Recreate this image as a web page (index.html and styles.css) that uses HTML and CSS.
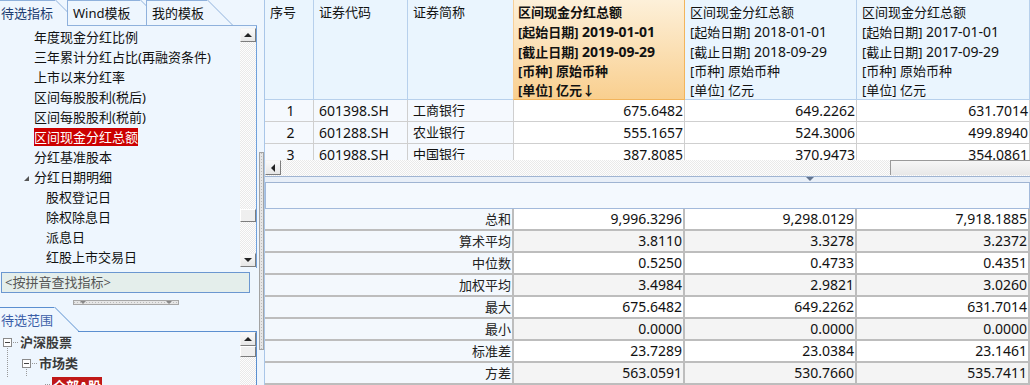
FILE: index.html
```html
<!DOCTYPE html>
<html lang="zh-CN">
<head>
  <meta charset="UTF-8" />
  <title>区间现金分红总额</title>
  <link rel="stylesheet" href="styles.css">
</head>
<body>
  <div class="app">
    <aside class="side">
      <div class="tabs">
        <div class="tab active">待选指标</div>
        <div class="tab wind">Wind模板</div>
        <div class="tab mine">我的模板</div>
      </div>

      <div class="listbox">
        <ul class="ind-list">
          <li>年度现金分红比例</li>
          <li>三年累计分红占比(再融资条件)</li>
          <li>上市以来分红率</li>
          <li>区间每股股利(税后)</li>
          <li>区间每股股利(税前)</li>
          <li class="sel"><span>区间现金分红总额</span></li>
          <li>分红基准股本</li>
          <li class="group"><i class="tri"></i>分红日期明细</li>
          <li class="child">股权登记日</li>
          <li class="child">除权除息日</li>
          <li class="child">派息日</li>
          <li class="child">红股上市交易日</li>
        </ul>
        <div class="vscroll">
          <div class="sb-btn"><i class="arr-up"></i></div>
          <div class="sb-track"><div class="sb-thumb list-thumb"></div></div>
          <div class="sb-btn"><i class="arr-down"></i></div>
        </div>
      </div>

      <div class="search">&lt;按拼音查找指标&gt;</div>
      <div class="hgrip"><i></i><i></i></div>

      <div class="tab2">待选范围</div>
      <div class="treebox">
        <div class="tree">
          <div class="node lv1"><i class="box"></i><i class="dots"></i><b>沪深股票</b></div>
          <div class="node lv2"><i class="box"></i><i class="dots"></i><b>市场类</b></div>
          <div class="node lv3"><i class="dots"></i><span class="tree-sel">全部A股</span></div>
        </div>
        <div class="vscroll">
          <div class="sb-btn"><i class="arr-up"></i></div>
          <div class="sb-track"><div class="sb-thumb"></div></div>
        </div>
      </div>
    </aside>

    <div class="vsplit"><div class="grip"></div></div>

    <main class="main">
      <div class="top">
        <div class="grid top-grid">
          <div class="hd">序号</div>
          <div class="hd">证券代码</div>
          <div class="hd">证券简称</div>
          <div class="hd hot">
            <div>区间现金分红总额</div>
            <div>[起始日期] <span class="n">2019-01-01</span></div>
            <div>[截止日期] <span class="n">2019-09-29</span></div>
            <div>[币种] 原始币种</div>
            <div>[单位] 亿元↓</div>
          </div>
          <div class="hd">
            <div>区间现金分红总额</div>
            <div>[起始日期] <span class="n">2018-01-01</span></div>
            <div>[截止日期] <span class="n">2018-09-29</span></div>
            <div>[币种] 原始币种</div>
            <div>[单位] 亿元</div>
          </div>
          <div class="hd">
            <div>区间现金分红总额</div>
            <div>[起始日期] <span class="n">2017-01-01</span></div>
            <div>[截止日期] <span class="n">2017-09-29</span></div>
            <div>[币种] 原始币种</div>
            <div>[单位] 亿元</div>
          </div>

          <div class="td key num center">1</div>
          <div class="td key num">601398.SH</div>
          <div class="td key">工商银行</div>
          <div class="td num right">675.6482</div>
          <div class="td num right">649.2262</div>
          <div class="td num right">631.7014</div>

          <div class="td key num center">2</div>
          <div class="td key num">601288.SH</div>
          <div class="td key">农业银行</div>
          <div class="td num right">555.1657</div>
          <div class="td num right">524.3006</div>
          <div class="td num right">499.8940</div>

          <div class="td key num center">3</div>
          <div class="td key num">601988.SH</div>
          <div class="td key">中国银行</div>
          <div class="td num right">387.8085</div>
          <div class="td num right">370.9473</div>
          <div class="td num right">354.0861</div>
        </div>
      </div>

      <div class="hscroll">
        <div class="sb-btn left"><i class="arr-left"></i></div>
        <div class="h-thumb"></div>
      </div>
      <div class="band"><i class="arr-down band-arr"></i></div>
      <div class="blank"></div>

      <div class="grid stats">
        <div class="lbl">总和</div><div class="val num">9,996.3296</div><div class="val num">9,298.0129</div><div class="val num">7,918.1885</div>
        <div class="lbl">算术平均</div><div class="val num alt">3.8110</div><div class="val num alt">3.3278</div><div class="val num alt">3.2372</div>
        <div class="lbl">中位数</div><div class="val num">0.5250</div><div class="val num">0.4733</div><div class="val num">0.4351</div>
        <div class="lbl">加权平均</div><div class="val num alt">3.4984</div><div class="val num alt">2.9821</div><div class="val num alt">3.0260</div>
        <div class="lbl">最大</div><div class="val num">675.6482</div><div class="val num">649.2262</div><div class="val num">631.7014</div>
        <div class="lbl">最小</div><div class="val num alt">0.0000</div><div class="val num alt">0.0000</div><div class="val num alt">0.0000</div>
        <div class="lbl">标准差</div><div class="val num">23.7289</div><div class="val num">23.0384</div><div class="val num">23.1461</div>
        <div class="lbl">方差</div><div class="val num alt">563.0591</div><div class="val num alt">530.7660</div><div class="val num alt">535.7411</div>
      </div>
    </main>
  </div>
</body>
</html>
```

FILE: styles.css
```css
:root {
  --panel: #eef6fe;
  --tabline: #8fb1dc;
  --blue: #5b8fd0;
  --hd-line: #b7d0ec;
  --cell-line: #cfcfcf;
  --stat-line: #bdbdbd;
}
html, body {
  margin: 0;
  padding: 0;
  overflow: hidden;
}
body {
  font-family: "Noto Sans", "Noto Sans CJK SC", sans-serif;
  font-size: 13px;
  color: #111;
  background: var(--panel);
}
.app {
  display: flex;
  width: 1030px;
  height: 385px;
  overflow: hidden;
}

/* ---------- left side ---------- */
.side {
  width: 257px;
  flex: none;
  display: flex;
  flex-direction: column;
  background: var(--panel);
}
.tabs {
  display: flex;
  height: 26px;
  flex: none;
  background: linear-gradient(var(--tabline), var(--tabline)) 67px 25px / 190px 1px no-repeat;
}
.tab {
  position: relative;
  box-sizing: border-box;
  height: 25px;
  line-height: 24px;
  border-top: 1px solid var(--tabline);
  background: var(--panel);
  white-space: nowrap;
}
.tab::after {
  content: "";
  position: absolute;
  top: -1px;
  left: 100%;
  height: 25px;
  border-left: 1px solid var(--tabline);
  transform: skewX(45deg);
  transform-origin: top left;
}
.tab.active {
  width: 55px;
  margin-right: 12px;
  color: #203c70;
  padding-left: 1px;
}
.tab.wind {
  width: 73px;
  margin-right: 6px;
  padding-left: 5px;
  border-left: 1px solid var(--tabline);
}
.tab.mine {
  width: 61px;
  padding-left: 5px;
  border-left: 1px solid var(--tabline);
}

.listbox {
  display: flex;
  height: 242px;
  flex: none;
  border-right: 1px solid #6fa0dc;
}
.ind-list {
  flex: 1;
  margin: 0;
  padding: 1px 0 0;
  list-style: none;
}
.ind-list li {
  height: 20px;
  line-height: 20px;
  padding-left: 34px;
  white-space: nowrap;
}
.ind-list li.sel span {
  display: inline-block;
  line-height: 18px;
  background: #cc0000;
  color: #fff;
}
.ind-list li.group {
  padding-left: 24px;
}
.tri {
  display: inline-block;
  width: 0;
  height: 0;
  margin-right: 5px;
  border-left: 5px solid transparent;
  border-bottom: 5px solid #555;
  vertical-align: 1px;
}
.ind-list li.child {
  padding-left: 46px;
}

/* scrollbars */
.vscroll {
  width: 16px;
  flex: none;
  display: flex;
  flex-direction: column;
  margin: 2px 0 1px;
}
.sb-btn {
  box-sizing: border-box;
  width: 16px;
  height: 14px;
  flex: none;
  display: flex;
  align-items: center;
  justify-content: center;
  background: linear-gradient(#fafafa, #e6e6e6);
  border: 1px solid;
  border-color: #f4f4f4 #7d7d7d #7d7d7d #f4f4f4;
}
.sb-track {
  flex: 1;
  background: repeating-conic-gradient(#e9e9e9 0 25%, #fdfdfd 0 50%) 0 0 / 2px 2px;
}
.sb-thumb {
  box-sizing: border-box;
  width: 16px;
  height: 11px;
  background: #efefef;
  border: 1px solid;
  border-color: #fff #7d7d7d #7d7d7d #fff;
}
.list-thumb {
  height: 13px;
  margin-top: 167px;
}
.arr-up, .arr-down, .arr-left {
  display: block;
  width: 0;
  height: 0;
}
.arr-up {
  border: 4px solid transparent;
  border-top: 0;
  border-bottom-color: #222;
}
.arr-down {
  border: 4px solid transparent;
  border-bottom: 0;
  border-top-color: #222;
}
.arr-left {
  border: 4px solid transparent;
  border-left: 0;
  border-right-color: #222;
}

.search {
  box-sizing: border-box;
  height: 21px;
  margin: 4px 7px 0 1px;
  padding-left: 3px;
  line-height: 19px;
  border: 1px solid #6b97d0;
  background: #e4eeeb;
  color: #555;
}
.hgrip {
  box-sizing: border-box;
  display: flex;
  justify-content: space-between;
  width: 106px;
  height: 6px;
  margin: 7px 0 0 73px;
  padding: 0 6px;
  border: 1px solid #a6a6a6;
  background: #e6e6e6 linear-gradient(90deg, #bbb 1px, transparent 1px) 0 1px / 3px 1px repeat-x;
}
.hgrip i {
  width: 0;
  height: 0;
  border: 3px solid transparent;
  border-bottom: 0;
  border-top-color: #888;
}

.tab2 {
  position: relative;
  box-sizing: border-box;
  width: 54px;
  height: 24px;
  margin-top: 2px;
  padding-left: 1px;
  line-height: 24px;
  color: #3b5ea8;
  border-top: 1px solid var(--blue);
  flex: none;
}
.tab2::after {
  content: "";
  position: absolute;
  top: -1px;
  left: 100%;
  height: 24px;
  border-left: 1px solid var(--blue);
  transform: skewX(45deg);
  transform-origin: top left;
}
.treebox {
  flex: 1;
  display: flex;
  border-right: 1px solid var(--blue);
  background: linear-gradient(var(--blue), var(--blue)) 78px 0 / 100% 1px no-repeat;
}
.treebox .vscroll {
  margin: 1px 0 0;
}
.tree {
  flex: 1;
  padding-top: 1px;
}
.node {
  position: relative;
  height: 21px;
  line-height: 21px;
  display: flex;
  align-items: center;
  color: #3a3a3a;
}
.node b {
  font-weight: bold;
}
.node.lv1 { padding-left: 3px; }
.node.lv2 { padding-left: 22px; }
.node.lv3 { padding-left: 41px; }
.box {
  box-sizing: border-box;
  width: 9px;
  height: 9px;
  border: 1px solid #8a8a8a;
  background: #fff linear-gradient(#444, #444) center / 5px 1px no-repeat;
  flex: none;
}
.dots {
  width: 5px;
  height: 1px;
  margin: 0 2px 0 1px;
  background: linear-gradient(90deg, #999 1px, transparent 1px) 0 0 / 2px 1px;
  flex: none;
}
.node.lv3 .dots {
  margin-left: 4px;
}
.node.lv1::after,
.node.lv2::after {
  content: "";
  position: absolute;
  top: 16px;
  height: 30px;
  width: 1px;
  background: linear-gradient(#999 1px, transparent 1px) 0 0 / 1px 2px;
}
.node.lv1::after { left: 7px; }
.node.lv2::after { left: 26px; height: 8px; }
.tree-sel {
  display: inline-block;
  margin-top: 4px;
  padding: 0 1px;
  line-height: 19px;
  background: #c01818;
  color: #fff;
  font-weight: bold;
}

/* ---------- splitter ---------- */
.vsplit {
  width: 7px;
  flex: none;
  background: var(--panel);
}
.grip {
  box-sizing: border-box;
  width: 5px;
  height: 198px;
  margin: 152px 0 0 2px;
  border: 1px solid #a3a3a3;
  background: #e6e6e6 linear-gradient(#bbb 1px, transparent 1px) 1px 0 / 1px 3px repeat-y;
}

/* ---------- right side ---------- */
.main {
  width: 766px;
  flex: none;
  display: flex;
  flex-direction: column;
  border-left: 1px solid #a9c6e8;
  box-sizing: border-box;
  background: #fff;
}
.grid {
  display: grid;
}
.num {
  font-size: 14px;
}
.n {
  font-size: 14px;
}
.top {
  height: 160px;
  flex: none;
  overflow: hidden;
}
.top-grid {
  grid-template-columns: 49px 94px 106px 171px 172px 173px;
  grid-template-rows: 100px 22px 22px 22px;
}
.hd {
  box-sizing: border-box;
  padding: 3px 0 0 5px;
  line-height: 19px;
  white-space: nowrap;
  overflow: hidden;
  background: #eaf5fe;
  border-right: 1px solid var(--hd-line);
  border-bottom: 1px solid var(--hd-line);
}
.hd.hot {
  padding-left: 4px;
  font-weight: bold;
  background: linear-gradient(#fdf0d9, #f9cf8f);
  border-color: #f2b45c;
  border-left: 1px solid #f7d09a;
  margin-left: -1px;
}
.td {
  box-sizing: border-box;
  padding: 0 5px;
  line-height: 21px;
  white-space: nowrap;
  border-right: 1px solid var(--cell-line);
  border-bottom: 1px solid var(--cell-line);
}
.td.key {
  background: #f5f9fe;
}
.td.center {
  text-align: center;
  padding-left: 8px;
}
.td.right {
  text-align: right;
  padding-right: 1px;
}

.hscroll {
  height: 16px;
  flex: none;
  display: flex;
  background: repeating-conic-gradient(#e9e9e9 0 25%, #fdfdfd 0 50%) 0 0 / 2px 2px;
}
.hscroll .sb-btn {
  width: 16px;
  height: 15px;
}
.h-thumb {
  box-sizing: border-box;
  width: 140px;
  height: 15px;
  margin-left: auto;
  background: linear-gradient(#f6f6f6, #e8e8e8);
  border-top: 1px solid #9a9a9a;
  border-left: 1px solid #9a9a9a;
}
.band {
  box-sizing: border-box;
  height: 7px;
  flex: none;
  padding-left: 541px;
  background: #e8eff8;
  border-top: 1px solid #9fb4d2;
  border-bottom: 1px solid #9fb4d2;
}
.band-arr {
  border-width: 4px 4px 0;
  border-top-color: #62748f;
}
.blank {
  box-sizing: border-box;
  height: 26px;
  flex: none;
  background: #f4f9fe;
  border: 1px solid #a3badb;
  border-top: 0;
}
.stats {
  grid-template-columns: 249px 171px 172px 173px;
  grid-auto-rows: 22px;
}
.lbl, .val {
  box-sizing: border-box;
  line-height: 20px;
  text-align: right;
  white-space: nowrap;
  border-right: 2px solid var(--stat-line);
  border-bottom: 2px solid var(--stat-line);
}
.lbl {
  padding-right: 1px;
  background: #f3f8fd;
  color: #222;
}
.val {
  padding-right: 1px;
  background: #fff;
}
.val.alt {
  background: #f4f4f4;
}
```
